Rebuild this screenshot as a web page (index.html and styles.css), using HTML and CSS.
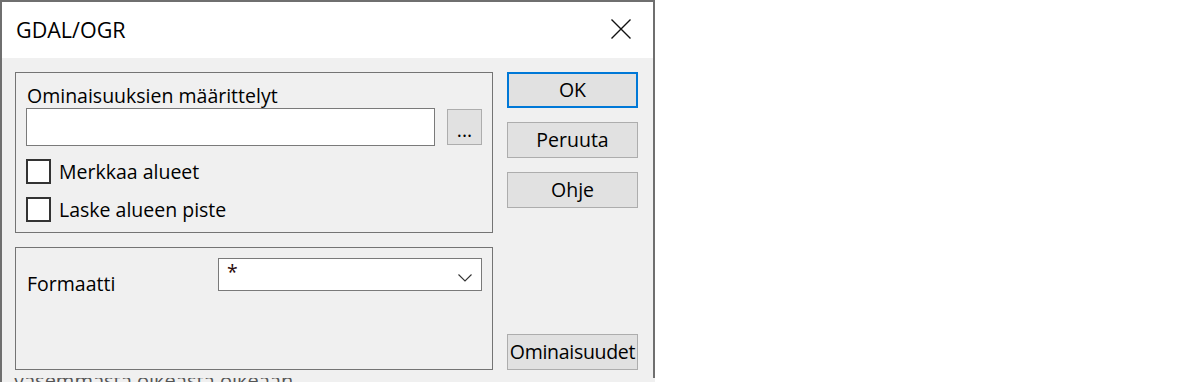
FILE: index.html
```html
<!DOCTYPE html>
<html lang="fi">
<head>
    <meta charset="UTF-8">
    <meta name="viewport" content="width=device-width, initial-scale=1.0">
    <title>GDAL/OGR</title>
    <link rel="stylesheet" href="styles.css">
</head>
<body>
    <div class="dialog">
        <div class="titlebar">
            <span class="title">GDAL/OGR</span>
            <svg class="close" width="20" height="20" viewBox="0 0 20 20">
                <path d="M0.5 0.5 L19.5 19.5 M19.5 0.5 L0.5 19.5" stroke="#111" stroke-width="1.4" fill="none"/>
            </svg>
        </div>

        <div class="content">
            <div class="left">
                <div class="group group-top">
                    <div class="label">Ominaisuuksien määrittelyt</div>
                    <div class="file-row">
                        <div class="edit"></div>
                        <button class="btn btn-browse">...</button>
                    </div>
                    <label class="check">
                        <span class="box"></span>
                        <span>Merkkaa alueet</span>
                    </label>
                    <label class="check">
                        <span class="box"></span>
                        <span>Laske alueen piste</span>
                    </label>
                </div>

                <div class="group group-bottom">
                    <div class="format-row">
                        <div class="format-label">Formaatti</div>
                        <div class="combo">
                            <span class="combo-value">*</span>
                            <svg width="14" height="8" viewBox="0 0 14 8">
                                <path d="M0.5 0.5 L7 7 L13.5 0.5" stroke="#333" stroke-width="1.1" fill="none"/>
                            </svg>
                        </div>
                    </div>
                </div>
            </div>

            <div class="buttons">
                <button class="btn btn-default">OK</button>
                <button class="btn">Peruuta</button>
                <button class="btn">Ohje</button>
                <button class="btn btn-props">Ominaisuudet</button>
            </div>
        </div>
    </div>

    <!-- window behind the dialog -->
    <div class="backdrop">
        <div class="backdrop-text">vasemmasta oikeasta oikeaan</div>
    </div>
</body>
</html>
```

FILE: styles.css
```css
body {
    margin: 0;
    background: #ffffff;
    font-family: "Open Sans", "Noto Sans", sans-serif;
    font-size: 19.5px;
    color: #000;
}
.dialog {
    width: 655px;
    height: 378px;
    box-sizing: border-box;
    border: 2px solid #6f6f6f;
    border-bottom: none;
    background: #f0f0f0;
    display: flex;
    flex-direction: column;
}
.titlebar {
    height: 56px;
    background: #ffffff;
    display: flex;
    align-items: center;
    justify-content: space-between;
    padding: 0 22px 0 14px;
}
.title {
    font-size: 21.5px;
    line-height: 56px;
    color: #000;
}
.close {
    display: block;
    margin-top: -2px;
}
.content {
    display: flex;
    gap: 14px;
    padding: 14px 15px 0 13px;
}
.left {
    width: 478px;
    display: flex;
    flex-direction: column;
    gap: 14px;
}
.group {
    border: 1px solid #747474;
    box-sizing: border-box;
}
.group-top {
    height: 161px;
    padding: 11px 10px 0 10px;
}
.group-bottom {
    height: 123px;
    padding: 10px 9px 0 10px;
}
.label {
    line-height: 24px;
    padding-left: 1px;
}
.file-row {
    display: flex;
    align-items: center;
    gap: 12px;
    height: 38px;
}
.edit {
    width: 409px;
    height: 38px;
    box-sizing: border-box;
    background: #fff;
    border: 1px solid #7a7a7a;
}
.btn {
    font-family: inherit;
    font-size: 19.5px;
    color: #000;
    background: #e1e1e1;
    border: 1px solid #adadad;
    box-sizing: border-box;
    padding: 0;
    white-space: nowrap;
    line-height: 24px;
}
.btn-browse {
    width: 35px;
    height: 36px;
    line-height: 20px;
    padding-top: 6px;
}
.check {
    display: flex;
    align-items: center;
    gap: 8px;
    height: 25px;
    line-height: 25px;
    margin-top: 13px;
}
.box {
    width: 25px;
    height: 25px;
    box-sizing: border-box;
    border: 2px solid #333;
    background: #fff;
}
.format-row {
    display: flex;
    align-items: flex-start;
}
.format-label {
    width: 192px;
    flex-shrink: 0;
    line-height: 24px;
    margin-top: 14px;
    padding-left: 1px;
    box-sizing: border-box;
}
.combo {
    width: 264px;
    height: 33px;
    flex-shrink: 0;
    box-sizing: border-box;
    background: #fff;
    border: 1px solid #7a7a7a;
    display: flex;
    align-items: center;
    justify-content: space-between;
    padding: 0 9px 0 8px;
}
.combo-value {
    line-height: 24px;
    margin-top: -5px;
    color: #2a0a0a;
}
.combo svg {
    display: block;
    margin-top: 6px;
}
.buttons {
    width: 131px;
    height: 298px;
    display: flex;
    flex-direction: column;
    gap: 14px;
}
.buttons .btn {
    height: 36px;
    width: 131px;
}
.btn-default {
    border: 2px solid #0078d7;
}
.btn-props {
    margin-top: auto;
    overflow: visible;
    letter-spacing: -0.3px;
}
.backdrop {
    height: 4px;
    overflow: hidden;
    background: #f0f0f0;
    border-left: 2px solid #6f6f6f;
    width: 653px;
}
.backdrop-text {
    margin-top: -7px;
    padding-left: 12px;
    line-height: 20px;
    color: #555;
    font-size: 20px;
}
```
